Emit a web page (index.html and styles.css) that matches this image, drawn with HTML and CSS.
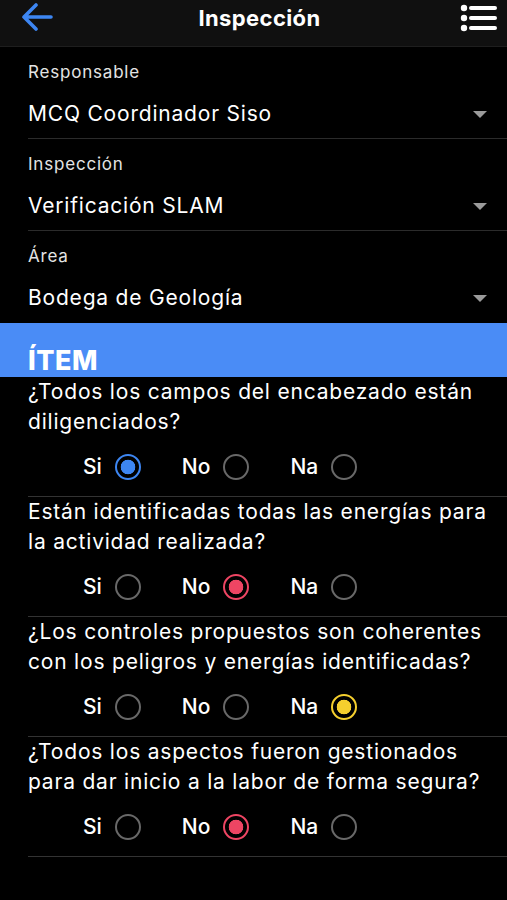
FILE: index.html
```html
<!DOCTYPE html>
<html lang="es">
<head>
    <meta charset="UTF-8">
    <meta name="viewport" content="width=device-width, initial-scale=1.0">
    <title>Inspección</title>
    <link rel="stylesheet" href="styles.css">
</head>
<body>
<div class="topbar">
    <button class="icon-btn back" type="button" aria-label="Volver">
        <svg width="34" height="30" viewBox="0 0 34 30">
            <path d="M31 14 H4 M16 2 L4 14 L16 26" fill="none" stroke="#3d86f2" stroke-width="3.6" stroke-linecap="round" stroke-linejoin="round"/>
        </svg>
    </button>
    <h1 class="title">Inspección</h1>
    <button class="icon-btn menu" type="button" aria-label="Menú">
        <svg width="40" height="30" viewBox="0 0 40 30">
            <circle cx="5" cy="5" r="3.2" fill="#fff"/>
            <circle cx="5" cy="15" r="3.2" fill="#fff"/>
            <circle cx="5" cy="25" r="3.2" fill="#fff"/>
            <path d="M12 5 H36 M12 15 H36 M12 25 H36" stroke="#fff" stroke-width="4" stroke-linecap="round"/>
        </svg>
    </button>
</div>

<div class="fields">
    <div class="field">
        <div class="field-label">Responsable</div>
        <div class="field-value">
            <span>MCQ Coordinador Siso</span>
            <span class="caret"></span>
        </div>
    </div>
    <div class="field">
        <div class="field-label">Inspección</div>
        <div class="field-value">
            <span>Verificación SLAM</span>
            <span class="caret"></span>
        </div>
    </div>
    <div class="field last">
        <div class="field-label">Área</div>
        <div class="field-value">
            <span>Bodega de Geología</span>
            <span class="caret"></span>
        </div>
    </div>
</div>

<div class="section-bar">ÍTEM</div>

<div class="questions">
    <div class="question">
        <p class="question-text">¿Todos los campos del encabezado están diligenciados?</p>
        <div class="options">
            <label class="option">Si <input type="radio" name="q1" class="si" checked></label>
            <label class="option">No <input type="radio" name="q1" class="no"></label>
            <label class="option">Na <input type="radio" name="q1" class="na"></label>
        </div>
    </div>
    <div class="question">
        <p class="question-text">Están identificadas todas las energías para la actividad realizada?</p>
        <div class="options">
            <label class="option">Si <input type="radio" name="q2" class="si"></label>
            <label class="option">No <input type="radio" name="q2" class="no" checked></label>
            <label class="option">Na <input type="radio" name="q2" class="na"></label>
        </div>
    </div>
    <div class="question">
        <p class="question-text">¿Los controles propuestos son coherentes con los peligros y energías identificadas?</p>
        <div class="options">
            <label class="option">Si <input type="radio" name="q3" class="si"></label>
            <label class="option">No <input type="radio" name="q3" class="no"></label>
            <label class="option">Na <input type="radio" name="q3" class="na" checked></label>
        </div>
    </div>
    <div class="question">
        <p class="question-text">¿Todos los aspectos fueron gestionados para dar inicio a la labor de forma segura?</p>
        <div class="options">
            <label class="option">Si <input type="radio" name="q4" class="si"></label>
            <label class="option">No <input type="radio" name="q4" class="no" checked></label>
            <label class="option">Na <input type="radio" name="q4" class="na"></label>
        </div>
    </div>
</div>
</body>
</html>
```

FILE: styles.css
```css
body {
    margin: 0;
    padding: 0;
    background: #000;
    color: #fff;
    font-family: 'Inter', 'Liberation Sans', sans-serif;
    min-height: 100vh;
}

.topbar {
    height: 36px;
    background: #101010;
    border-bottom: 1px solid #1e1e1e;
    display: grid;
    grid-template-columns: 1fr auto 1fr;
    align-items: center;
    padding: 0 8px 10px 20px;
}

.icon-btn {
    background: none;
    border: none;
    padding: 0;
    display: flex;
    cursor: pointer;
}

.menu {
    justify-self: end;
}

.title {
    margin: 0;
    font-size: 22px;
    font-weight: 700;
    letter-spacing: 0.4px;
}

.fields {
    padding-left: 28px;
}

.field {
    height: 78px;
    padding-top: 13px;
    border-bottom: 1px solid #2b2b2b;
}

.field.last {
    border-bottom: none;
    height: 79px;
}

.field-label {
    font-size: 17px;
    line-height: 24px;
    letter-spacing: 0.8px;
    color: #e4e4e4;
}

.field-value {
    margin-top: 15px;
    font-size: 21px;
    line-height: 30px;
    letter-spacing: 0.8px;
    display: flex;
    align-items: center;
    justify-content: space-between;
    padding-right: 20px;
}

.caret {
    width: 0;
    height: 0;
    border-left: 7px solid transparent;
    border-right: 7px solid transparent;
    border-top: 7px solid #9a9a9a;
}

.section-bar {
    background: #4a8cf6;
    height: 54px;
    box-sizing: border-box;
    padding: 21px 0 0 28px;
    font-size: 27px;
    font-weight: 800;
    line-height: 34px;
    letter-spacing: 0.5px;
}

.questions {
    padding-left: 28px;
}

.question {
    border-bottom: 1px solid #333;
}

.question-text {
    margin: 0;
    padding-right: 12px;
    font-size: 21px;
    line-height: 30px;
    letter-spacing: 0.8px;
}

.options {
    height: 59px;
    display: flex;
    align-items: center;
    gap: 41px;
    padding-left: 55px;
}

.option {
    display: flex;
    align-items: center;
    gap: 13px;
    font-size: 21px;
    font-weight: 500;
}

.option input {
    appearance: none;
    -webkit-appearance: none;
    margin: 0;
    width: 26px;
    height: 26px;
    border-radius: 50%;
    border: 2px solid #686868;
    box-sizing: border-box;
}

.option input.si:checked {
    border: 2.5px solid #3d86f2;
    background: radial-gradient(circle, #3d86f2 0 7px, transparent 7.6px);
}

.option input.no:checked {
    border: 2.5px solid #ee4563;
    background: radial-gradient(circle, #ee4563 0 7px, transparent 7.6px);
}

.option input.na:checked {
    border: 2.5px solid #f5cf2e;
    background: radial-gradient(circle, #f5cf2e 0 7px, transparent 7.6px);
}
```
